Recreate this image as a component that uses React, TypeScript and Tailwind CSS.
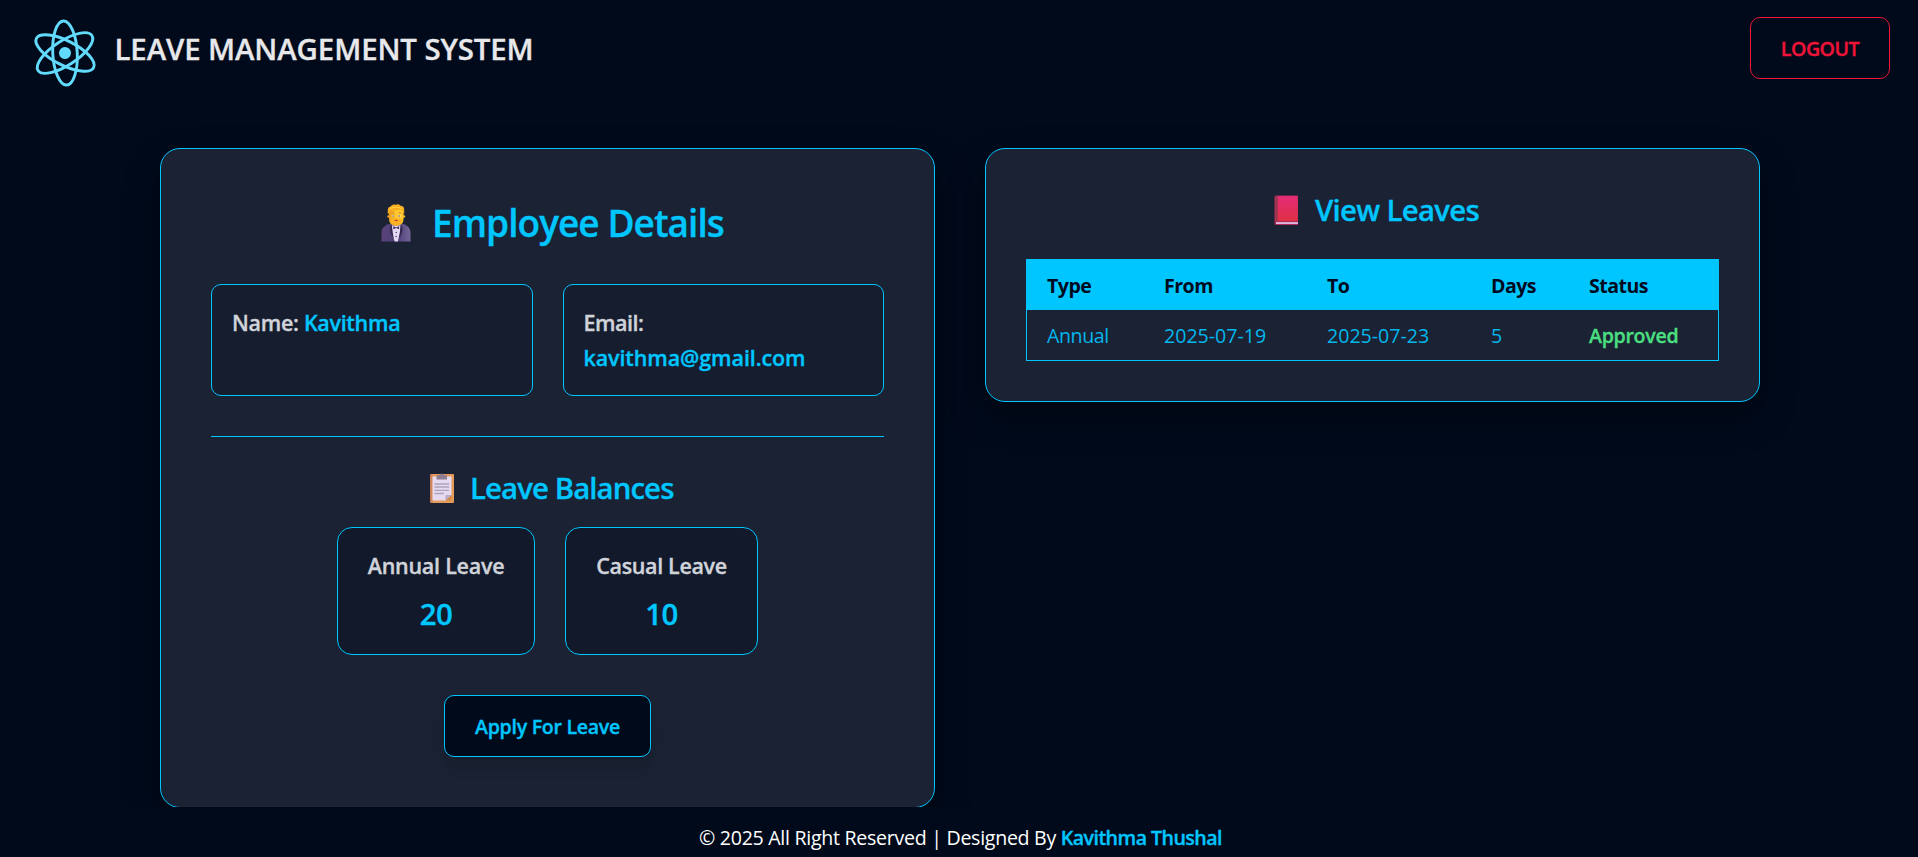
import React from "react";

function ReactLogo() {
  return (
    <svg width="68" height="68" viewBox="-11.65 -11.65 23.3 23.3" className="shrink-0" aria-hidden="true">
      <g transform="rotate(87)" fill="none" stroke="#61dafb" strokeWidth="1">
        <circle r="2.05" fill="#61dafb" stroke="none" />
        <ellipse rx="11" ry="4.2" />
        <ellipse rx="11" ry="4.2" transform="rotate(60)" />
        <ellipse rx="11" ry="4.2" transform="rotate(120)" />
      </g>
    </svg>
  );
}

function PersonIcon() {
  return (
    <svg width="30" height="38" viewBox="0 0 30 38" className="mt-px shrink-0" aria-hidden="true">
      <defs>
        <linearGradient id="suit" x1="0" x2="1">
          <stop offset="0" stopColor="#5b4379" />
          <stop offset="0.5" stopColor="#4b3f78" />
          <stop offset="1" stopColor="#746596" />
        </linearGradient>
        <linearGradient id="face" x1="0" x2="1">
          <stop offset="0" stopColor="#ee9b1c" />
          <stop offset="0.5" stopColor="#ffc72e" />
          <stop offset="1" stopColor="#ffcb30" />
        </linearGradient>
      </defs>
      <path d="M0.5 37.5V29q0-7.5 9-9.500h11q9 2 9 9.500v8.500z" fill="url(#suit)" />
      <path d="M11 21.500h8.500l-.8 12-2 4h-3l-2-4z" fill="#e6d9f7" />
      <path d="M10.500 20.500q-2 3-1 8.500l4 8.500-1.800-8.500zM20 20.500q2.500 3 1 8.500l-4 8.500 1.700-8.500z" fill="#33284f" />
      <path d="M8 5h14.500v10q0 6.500-7.300 6.500T8 15z" fill="url(#face)" />
      <circle cx="7.600" cy="12.500" r="1.300" fill="#f0a21f" />
      <circle cx="22.800" cy="12.500" r="1.300" fill="#ffc52c" />
      <path d="M6.800 10.500V5.500q0-2.500 2.700-3Q11.500 0 14.500.8q3-1.300 5 .9 3.700.3 3.700 3.800v5l-1.500-3.500-3-1.200-4 .4-5 .3-1.300 2z" fill="#f7ae20" />
      <path d="M9 4.500q5.500-2.500 12 0" stroke="#ffd043" strokeWidth="1.200" fill="none" />
      <path d="M9 16q1-1.800 3.500-1.500l2.700-.3 2.700.3q2.500-.3 3.500 1.500-.5 5.500-6.200 5.500T9 16z" fill="#f9b224" />
      <path d="M10.300 9.300l2.300-.7M17.800 8.600l2.300.7" stroke="#cf7c1e" strokeWidth="0.900" />
      <ellipse cx="12" cy="11.900" rx="1.400" ry="0.900" fill="#fff3dc" />
      <ellipse cx="18.300" cy="11.900" rx="1.400" ry="0.900" fill="#fff3dc" />
      <circle cx="12.200" cy="11.900" r="0.750" fill="#5b4348" />
      <circle cx="18.100" cy="11.900" r="0.750" fill="#5b4348" />
      <path d="M13.300 16.200q1.900-.7 3.800 0-1.900 1.800-3.800 0z" fill="#c62a24" />
      <path d="M12.300 22.300l2.900 1.100 2.900-1.100v2.900l-2.900-1.100-2.900 1.100z" fill="#382d5c" />
      <circle cx="15.200" cy="28.500" r="0.700" fill="#44366b" />
      <circle cx="15.200" cy="32.500" r="0.700" fill="#44366b" />
    </svg>
  );
}

function ClipboardIcon() {
  return (
    <svg width="24" height="30" viewBox="0 0 24 30" className="shrink-0" aria-hidden="true">
      <defs>
        <linearGradient id="board" x1="0" x2="1">
          <stop offset="0" stopColor="#c17a59" />
          <stop offset="0.150" stopColor="#e49a5d" />
          <stop offset="1" stopColor="#e39b59" />
        </linearGradient>
      </defs>
      <rect y="1" width="24" height="29" rx="1" fill="url(#board)" />
      <path d="M2.500 3.500h19V22l-6 5.500h-13z" fill="#e5daf0" />
      <path d="M15.500 27.500V22h6z" fill="#bba9ca" />
      <path d="M15.500 27.500L21.500 22v5.500z" fill="#d28a4d" />
      <path d="M6.500 3.500q0-1.500 1.500-1.500h2q1.500-3 4 0h1.500q1.500 0 1.500 1.500v3h-10.500z" fill="#8f7d94" />
      <path d="M4.500 11h14.500M4.500 14h14.500M4.500 17.300h14.500M4.500 20.500h9.500" stroke="#afa2bc" strokeWidth="1.300" />
    </svg>
  );
}

function BookIcon() {
  return (
    <svg width="24" height="30" viewBox="0 0 24 30" className="shrink-0" aria-hidden="true">
      <defs>
        <linearGradient id="cover" x1="0" x2="0" y1="0" y2="1">
          <stop offset="0" stopColor="#e42c76" />
          <stop offset="1" stopColor="#df3046" />
        </linearGradient>
      </defs>
      <path d="M2 0.500h21q1 0 1 1V30H2q-1.500 0-1.500-2V2q0-1.500 1.500-1.500z" fill="#b02b57" />
      <path d="M3.500 1H23q.7 0 .7.700V26H3.500z" fill="url(#cover)" />
      <path d="M1 2q0-1.200 1.500-1.200h1.200V26L1 28z" fill="#9c3650" />
      <path d="M2 27.200h22v1.700H2z" fill="#e5c8ee" />
    </svg>
  );
}

const detail = "h-[112px] rounded-[10px] border border-[#00c6ff] bg-[#151d2e] p-5 text-[21.500px] leading-[35px] font-semibold text-[#d0d3d9] [-webkit-text-stroke:0.35px]";
const stat = "h-[128px] rounded-[15px] border border-[#00c6ff] bg-[#11192b] py-5 text-center font-semibold [-webkit-text-stroke:0.35px]";

export default function App() {
  return (
    <div className="flex h-[857px] flex-col overflow-hidden bg-[#000a1b] font-['Open_Sans','Noto_Sans',sans-serif] whitespace-nowrap">
      <div className="h-[807px] overflow-hidden">
        <header className="flex h-[96px] items-center justify-between pr-7 pl-[30.500px]">
          <div className="flex items-center">
            <div className="pt-2.5"><ReactLogo /></div>
            <h1 className="ml-4 pt-px text-[29.400px] leading-10 font-semibold tracking-[-0.100px] text-[#e8e8ea] [-webkit-text-stroke:0.3px]">LEAVE MANAGEMENT SYSTEM</h1>
          </div>
          <button className="h-[62px] w-[140px] rounded-[10px] border border-[#f01438] pt-px text-[19.600px] font-semibold tracking-[-0.500px] text-[#f01438] [-webkit-text-stroke:0.35px]">LOGOUT</button>
        </header>

        <main className="flex items-start gap-[50px] pt-[52px] pr-[158px] pl-[160px]">
          <section className="w-[775px] shrink-0 rounded-[20px] border border-[#00c6ff] bg-[#1a2233] p-[50px] shadow-[0_15px_35px_rgba(0,0,0,0.35)]">
            <h2 className="flex h-[47px] items-center pl-[170px] text-[37px] leading-[47px] font-semibold tracking-[-0.950px] text-[#00c6ff] [-webkit-text-stroke:0.3px]">
              <PersonIcon />
              <span className="ml-[21px]">Employee Details</span>
            </h2>
            <div className="mt-[38px] grid grid-cols-2 gap-[30px]">
              <div className={detail}>
                <p className="tracking-[-0.300px]">Name: <span className="text-[#00c6ff]">Kavithma</span></p>
              </div>
              <div className={detail}>
                <p className="tracking-[-0.500px]">Email:</p>
                <p className="tracking-[-0.100px] text-[#00c6ff]">kavithma@gmail.com</p>
              </div>
            </div>
            <hr className="mt-10 border-t border-[#00c6ff]" />
            <h3 className="mt-[30px] flex h-[41px] items-center pl-[219px] text-[29.400px] leading-[41px] font-semibold tracking-[-0.920px] text-[#00c6ff] [-webkit-text-stroke:0.3px]">
              <ClipboardIcon />
              <span className="ml-4 pt-0.5">Leave Balances</span>
            </h3>
            <div className="mt-[19px] flex gap-[30px] pl-[126px]">
              <div className={stat + " w-[198px]"}>
                <p className="text-[21.500px] leading-[35px] tracking-[-0.250px] text-[#d0d3d9]">Annual Leave</p>
                <p className="mt-[11px] text-[29.400px] leading-[41px] tracking-[-0.500px] text-[#00c6ff]">20</p>
              </div>
              <div className={stat + " w-[193px]"}>
                <p className="text-[21.500px] leading-[35px] tracking-[-0.350px] text-[#d0d3d9]">Casual Leave</p>
                <p className="mt-[11px] text-[29.400px] leading-[41px] tracking-[-0.500px] text-[#00c6ff]">10</p>
              </div>
            </div>
            <div className="mt-10 flex pl-[233px]">
              <button className="h-[62px] w-[207px] rounded-[10px] border border-[#00c6ff] bg-[#000a1b] pt-px text-[19.600px] font-semibold tracking-[-0.300px] text-[#00c6ff] shadow-[0_10px_15px_rgba(0,0,0,0.1)] [-webkit-text-stroke:0.35px]">Apply For Leave</button>
            </div>
          </section>

          <section className="h-[254px] w-[775px] shrink-0 rounded-[20px] border border-[#00c6ff] bg-[#1a2233] p-10 shadow-[0_15px_35px_rgba(0,0,0,0.35)]">
            <h2 className="flex h-[41px] items-center pl-[248px] text-[29.400px] leading-[41px] font-semibold tracking-[-0.720px] text-[#00c6ff] [-webkit-text-stroke:0.3px]">
              <BookIcon />
              <span className="ml-[17px] pt-0.5">View Leaves</span>
            </h2>
            <div className="mt-[29px] h-[102px] border border-[#00c6ff] text-[19.600px]">
              <table className="w-full table-fixed border-collapse text-left">
                <colgroup>
                  <col className="w-[117px]" />
                  <col className="w-[163px]" />
                  <col className="w-[164px]" />
                  <col className="w-[98px]" />
                  <col />
                </colgroup>
                <thead>
                  <tr className="h-[50px] bg-[#00c6ff] text-[#000a1e]">
                    {["Type", "From", "To", "Days", "Status"].map((h) => (
                      <th key={h} className="pt-0.5 pl-5 font-bold tracking-[-0.550px]">{h}</th>
                    ))}
                  </tr>
                </thead>
                <tbody>
                  <tr className="h-[50px] text-[#03b6ec]">
                    <td className="pt-0.5 pl-5 tracking-[-0.400px]">Annual</td>
                    <td className="pt-0.5 pl-5">2025-07-19</td>
                    <td className="pt-0.5 pl-5">2025-07-23</td>
                    <td className="pt-0.5 pl-5">5</td>
                    <td className="pt-0.5 pl-5 font-semibold tracking-[-0.300px] text-[#4ade80] [-webkit-text-stroke:0.35px]">Approved</td>
                  </tr>
                </tbody>
              </table>
            </div>
          </section>
        </main>
      </div>
      <footer className="flex h-[50px] shrink-0 items-center pt-3 pl-[699px] text-[19.600px] text-white">
        <p className="tracking-[-0.290px]">© 2025 All Right Reserved | Designed By <span className="font-semibold tracking-[-0.550px] text-[#00c6ff] [-webkit-text-stroke:0.35px]">Kavithma Thushal</span></p>
      </footer>
    </div>
  );
}
